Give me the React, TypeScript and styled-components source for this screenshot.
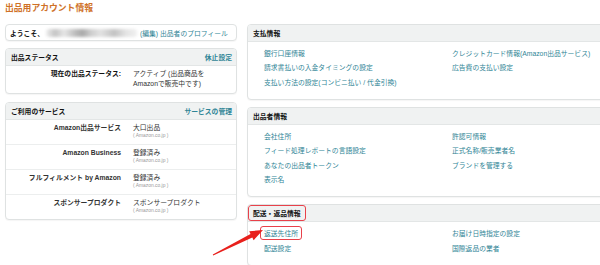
import React from "react";
import styled, { createGlobalStyle } from "styled-components";

const Global = createGlobalStyle`
  html, body { margin: 0; padding: 0; background: #fff; overflow: hidden; }
  body { width: 600px; height: 265px; }
`;

const FONT = `"Liberation Sans", "Noto Sans CJK JP", sans-serif`;

const Page = styled.div`
  position: relative;
  width: 600px;
  height: 265px;
  overflow: hidden;
  padding: 3px 0 0 5px;
  box-sizing: border-box;
  font-family: ${FONT};
  font-size: 6.8px;
  color: #111;
`;

const Title = styled.h1`
  margin: 0;
  font-size: 8.8px;
  line-height: 10px;
  font-weight: 700;
  color: #cf7128;
  letter-spacing: 0;
`;

const Columns = styled.div`
  display: flex;
  gap: 10px;
  margin-top: 11px;
  align-items: flex-start;
`;

const Column = styled.div<{ $w: number; $gaps: number[] }>`
  width: ${(p) => p.$w}px;
  flex: none;
  display: flex;
  flex-direction: column;
  & > *:nth-child(2) { margin-top: ${(p) => p.$gaps[0]}px; }
  & > *:nth-child(3) { margin-top: ${(p) => p.$gaps[1]}px; }
`;

const Box = styled.section`
  border: 1px solid #dfe2e2;
  border-radius: 4px;
  background: #fff;
  box-shadow: 0 1px 1px rgba(0, 0, 0, 0.04);
  overflow: hidden;
`;

const Welcome = styled(Box)`
  height: 17px;
  box-sizing: border-box;
  display: flex;
  align-items: center;
  padding: 0 4px 0 4px;
`;

const Bold = styled.span`
  font-weight: 700;
  color: #111;
  white-space: nowrap;
`;

const Blur = styled.span`
  display: block;
  width: 91px;
  height: 8px;
  margin: 0 3px 0 2px;
  border-radius: 3px;
  background: linear-gradient(
    90deg,
    #eeeeee 0%,
    #c4c4c4 10%,
    #e6e6e6 20%,
    #bdbdbd 32%,
    #a9a9a9 40%,
    #cfcfcf 50%,
    #e2e2e2 60%,
    #c2c2c2 75%,
    #e4e4e4 88%,
    #f0f0f0 100%
  );
  filter: blur(1.6px);
`;

const Link = styled.a<{ $bold?: boolean }>`
  color: #2f8596;
  text-decoration: none;
  white-space: nowrap;
  font-weight: ${(p) => (p.$bold ? 700 : 400)};
`;

const Header = styled.div`
  height: 16px;
  background: #f0f2f2;
  border-bottom: 1px solid #e3e6e6;
  display: flex;
  align-items: center;
  justify-content: space-between;
  padding: 0 4px 0 5px;
`;

const HeaderTitle = styled.span`
  font-weight: 700;
  color: #111;
  white-space: nowrap;
`;

const Highlight = styled.span<{ $pad: number }>`
  display: inline-flex;
  align-items: center;
  border: 1.2px solid #e8414a;
  border-radius: 3px;
  margin-left: -${(p) => p.$pad + 1}px;
  padding: 0 ${(p) => p.$pad}px;
  align-self: stretch;
`;

const StatusBody = styled.div`
  display: grid;
  grid-template-columns: 115px 1fr;
  column-gap: 12px;
  padding: 3px 0 5px 0;
  line-height: 9.5px;
`;

const Label = styled.div`
  text-align: right;
  font-weight: 700;
  color: #111;
  white-space: nowrap;
`;

const Value = styled.div`
  color: #333;
  white-space: nowrap;
`;

const Row = styled.div<{ $last?: boolean }>`
  display: grid;
  grid-template-columns: 115px 1fr;
  column-gap: 12px;
  padding: 3px 0 4px 0;
  height: 17px;
  border-bottom: ${(p) => (p.$last ? "none" : "1px solid #eceeee")};
`;

const Main = styled.div`
  line-height: 9px;
  color: #333;
`;

const Sub = styled.div`
  line-height: 8px;
  font-size: 4.9px;
  color: #9a9a9a;
`;

const LinkGrid = styled.div`
  display: grid;
  grid-template-columns: 188px auto;
  grid-auto-rows: 14.3px;
  align-items: center;
  padding: 4px 0 10px 16px;
`;

const Cell = styled.div`
  display: flex;
  align-items: center;
  height: 14.3px;
`;

const ArrowSvg = styled.svg`
  position: absolute;
  left: 205px;
  top: 222px;
  width: 65px;
  height: 40px;
  overflow: visible;
`;

type Svc = { label: string; value: string };
const services: Svc[] = [
  { label: "Amazon出品サービス", value: "大口出品" },
  { label: "Amazon Business", value: "登録済み" },
  { label: "フルフィルメント by Amazon", value: "登録済み" },
  { label: "スポンサープロダクト", value: "スポンサープロダクト" },
];

const payment = [
  "銀行口座情報",
  "クレジットカード情報(Amazon出品サービス)",
  "請求書払いの入金タイミングの設定",
  "広告費の支払い設定",
  "支払い方法の設定(コンビニ払い / 代金引換)",
];

const seller = [
  "会社住所",
  "許認可情報",
  "フィード処理レポートの言語設定",
  "正式名称/販売業者名",
  "あなたの出品者トークン",
  "ブランドを管理する",
  "表示名",
];

export default function App() {
  return (
    <Page>
      <Global />
      <Title>出品用アカウント情報</Title>
      <Columns>
        <Column $w={232} $gaps={[7, 8]}>
          <Welcome>
            <Bold>ようこそ、</Bold>
            <Blur />
            <Link>(編集) 出品者のプロフィール</Link>
          </Welcome>
          <Box>
            <Header>
              <HeaderTitle>出品ステータス</HeaderTitle>
              <Link $bold>休止設定</Link>
            </Header>
            <StatusBody>
              <Label>現在の出品ステータス:</Label>
              <Value>
                アクティブ (出品商品を
                <br />
                Amazonで販売中です)
              </Value>
            </StatusBody>
          </Box>
          <Box>
            <Header>
              <HeaderTitle>ご利用のサービス</HeaderTitle>
              <Link $bold>サービスの管理</Link>
            </Header>
            {services.map((s, i) => (
              <Row key={s.label} $last={i === services.length - 1}>
                <Label>
                  <Main as="span">{s.label}</Main>
                </Label>
                <div>
                  <Main>{s.value}</Main>
                  <Sub>( Amazon.co.jp )</Sub>
                </div>
              </Row>
            ))}
          </Box>
        </Column>
        <Column $w={380} $gaps={[7, 7]}>
          <Box>
            <Header>
              <HeaderTitle>支払情報</HeaderTitle>
            </Header>
            <LinkGrid>
              {payment.map((t) => (
                <Cell key={t}>
                  <Link>{t}</Link>
                </Cell>
              ))}
            </LinkGrid>
          </Box>
          <Box>
            <Header>
              <HeaderTitle>出品者情報</HeaderTitle>
            </Header>
            <LinkGrid>
              {seller.map((t) => (
                <Cell key={t}>
                  <Link>{t}</Link>
                </Cell>
              ))}
            </LinkGrid>
          </Box>
          <Box>
            <Header>
              <Highlight $pad={4}>
                <HeaderTitle>配送・返品情報</HeaderTitle>
              </Highlight>
            </Header>
            <LinkGrid>
              <Cell>
                <Highlight $pad={3} style={{ height: "14px", boxSizing: "border-box" }}>
                  <Link>返送先住所</Link>
                </Highlight>
              </Cell>
              <Cell>
                <Link>お届け日時指定の設定</Link>
              </Cell>
              <Cell>
                <Link>配送設定</Link>
              </Cell>
              <Cell>
                <Link>国際返品の業者</Link>
              </Cell>
            </LinkGrid>
          </Box>
        </Column>
      </Columns>
      <ArrowSvg viewBox="0 0 65 40">
        <polygon
          points="7.8,32.6 45.5,12.0 44.2,9.3 58,8 48.6,18.3 47.3,15.6 8.2,33.4"
          fill="#e8201c"
        />
      </ArrowSvg>
    </Page>
  );
}
